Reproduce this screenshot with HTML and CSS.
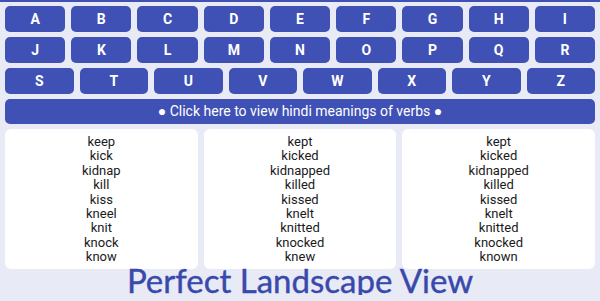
FILE: index.html
```html
<!DOCTYPE html>
<html lang="en">
<head>
    <meta charset="UTF-8">
    <meta name="viewport" content="width=device-width, initial-scale=1.0">
    <title>Verb Forms</title>
    <link rel="stylesheet" href="styles.css">
</head>
<body>

<!-- Алфавіт -->
<section class="letters">
    <div class="row row-9">
        <div class="key">A</div><div class="key">B</div><div class="key">C</div>
        <div class="key">D</div><div class="key">E</div><div class="key">F</div>
        <div class="key">G</div><div class="key">H</div><div class="key">I</div>
    </div>
    <div class="row row-9">
        <div class="key">J</div><div class="key">K</div><div class="key">L</div>
        <div class="key">M</div><div class="key">N</div><div class="key">O</div>
        <div class="key">P</div><div class="key">Q</div><div class="key">R</div>
    </div>
    <div class="row row-8">
        <div class="key">S</div><div class="key">T</div><div class="key">U</div>
        <div class="key">V</div><div class="key">W</div><div class="key">X</div>
        <div class="key">Y</div><div class="key">Z</div>
    </div>
    <div class="hindi-bar">&#9679; Click here to view hindi meanings of verbs &#9679;</div>
</section>

<!-- Форми дієслів -->
<section class="verbs">
    <div class="card">
        <div>keep</div><div>kick</div><div>kidnap</div><div>kill</div><div>kiss</div>
        <div>kneel</div><div>knit</div><div>knock</div><div>know</div>
    </div>
    <div class="card">
        <div>kept</div><div>kicked</div><div>kidnapped</div><div>killed</div><div>kissed</div>
        <div>knelt</div><div>knitted</div><div>knocked</div><div>knew</div>
    </div>
    <div class="card">
        <div>kept</div><div>kicked</div><div>kidnapped</div><div>killed</div><div>kissed</div>
        <div>knelt</div><div>knitted</div><div>knocked</div><div>known</div>
    </div>
</section>

<div class="caption">Perfect Landscape View</div>

</body>
</html>
```

FILE: styles.css
```css
/* Основа сторінки */
body {
    margin: 0;
    font-family: Roboto, 'Noto Sans', sans-serif;
    background-color: #e8eaf6;
    border-top: 2px solid #3f51b5;
}

/* Блок з літерами */
.letters {
    display: flex;
    flex-direction: column;
    gap: 5px;
    padding: 4px 5px 0 5px;
}

.row {
    display: grid;
    gap: 6px;
}

.row-9 {
    grid-template-columns: repeat(9, 1fr);
}

.row-8 {
    grid-template-columns: repeat(8, 1fr);
}

.key {
    background-color: #3f51b5;
    color: #fff;
    height: 26px;
    line-height: 26px;
    text-align: center;
    font-weight: bold;
    font-size: 14px;
    border-radius: 5px;
}

/* Кнопка з перекладом */
.hindi-bar {
    background-color: #3f51b5;
    color: #fff;
    height: 25px;
    line-height: 25px;
    text-align: center;
    font-size: 14px;
    border-radius: 5px;
}

/* Картки з формами */
.verbs {
    display: grid;
    grid-template-columns: repeat(3, 1fr);
    gap: 6px;
    padding: 5px 5px 0 5px;
}

.card {
    background-color: #fff;
    border-radius: 6px;
    height: 140px;
    box-sizing: border-box;
    padding-top: 6px;
    text-align: center;
    font-size: 13px;
    line-height: 14.4px;
    color: #1a1a1a;
}

/* Підпис знизу */
.caption {
    text-align: center;
    font-family: Lato, sans-serif;
    font-size: 33px;
    line-height: 29px;
    margin-top: -3px;
    color: #3949ab;
    -webkit-text-stroke: 0.4px #3949ab;
}
```
